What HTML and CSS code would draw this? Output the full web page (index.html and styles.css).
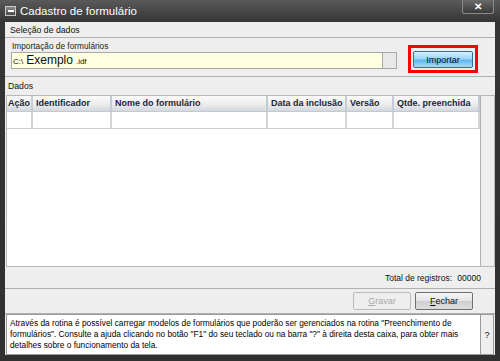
FILE: index.html
```html
<!DOCTYPE html>
<html lang="pt">
<head>
  <meta charset="UTF-8" />
  <title>Cadastro de formulário</title>
  <link rel="stylesheet" href="styles.css">
</head>
<body>
  <div class="window">
    <div class="titlebar">
      <span class="sysmenu"><span class="dash"></span></span>
      <span class="title">Cadastro de formulário</span>
      <span class="close">&#x2715;</span>
    </div>

    <div class="content">
      <div class="section-head">Seleção de dados</div>

      <div class="import">
        <div class="import-left">
          <div class="label">Importação de formulários</div>
          <div class="file-row">
            <div class="file-input"><span class="small">C:\</span><span class="big">Exemplo</span><span class="small">.idf</span></div>
            <div class="file-btn"></div>
          </div>
        </div>
        <div class="highlight">
          <button class="btn-blue">Importar</button>
        </div>
      </div>

      <div class="group-label">Dados</div>

      <div class="table-box">
        <div class="table-main">
          <div class="row head">
            <div class="c c1">Ação</div>
            <div class="c c2">Identificador</div>
            <div class="c c3">Nome do formulário</div>
            <div class="c c4">Data da inclusão</div>
            <div class="c c5">Versão</div>
            <div class="c c6">Qtde. preenchida</div>
          </div>
          <div class="row">
            <div class="c c1"></div>
            <div class="c c2"></div>
            <div class="c c3"></div>
            <div class="c c4"></div>
            <div class="c c5"></div>
            <div class="c c6"></div>
          </div>
        </div>
        <div class="scroll"></div>
      </div>

      <div class="total">Total de registros: <span class="num">00000</span></div>

      <div class="buttons">
        <button class="btn disabled"><u>G</u>ravar</button>
        <button class="btn"><u>F</u>echar</button>
      </div>

      <div class="help">
        <div class="help-text">Através da rotina é possível carregar modelos de formulários que poderão ser gerenciados na rotina "Preenchimento de formulários". Consulte a ajuda clicando no botão "F1" do seu teclado ou na barra "?" à direita desta caixa, para obter mais detalhes sobre o funcionamento da tela.</div>
        <div class="help-q">?</div>
      </div>
    </div>
  </div>
</body>
</html>
```

FILE: styles.css
```css
* {
  box-sizing: border-box;
  margin: 0;
  padding: 0;
}

body {
  background: #2e2e2e;
  font-family: 'Liberation Sans', Arial, sans-serif;
  font-size: 9px;
  color: #111;
}

.window {
  width: 500px;
  height: 361px;
  background: linear-gradient(#5a5a5a, #353535 22px, #303030);
  padding: 0 5px;
  display: flex;
  flex-direction: column;
}

.titlebar {
  height: 22px;
  flex-shrink: 0;
  display: flex;
  align-items: center;
  color: #fff;
}

.sysmenu {
  width: 11px;
  height: 10px;
  border: 1px solid #c8c8c8;
  background: linear-gradient(#8a8a8a, #4a4a4a);
  display: flex;
  align-items: center;
  justify-content: center;
  margin-right: 4px;
}

.dash {
  width: 6px;
  height: 2px;
  background: #fff;
}

.title {
  font-size: 11.5px;
  flex: 1;
}

.close {
  width: 32px;
  height: 14px;
  align-self: flex-start;
  margin-right: 1px;
  border: 1px solid #8a8a8a;
  border-top: none;
  border-radius: 0 0 3px 3px;
  background: linear-gradient(#6a6a6a, #3a3a3a);
  font-size: 10px;
  font-weight: bold;
  text-align: center;
  line-height: 13px;
}

.content {
  height: 333px;
  flex-shrink: 0;
  background: #eeeeee;
  display: flex;
  flex-direction: column;
}

.section-head {
  height: 16px;
  padding: 3px 5px 0;
  font-size: 8.7px;
  border-bottom: 1px solid #b0b0b0;
}

.import {
  height: 39px;
  display: flex;
  align-items: flex-start;
  padding: 3px 0 0 6px;
  border-bottom: 1px solid #b0b0b0;
}

.import-left {
  display: flex;
  flex-direction: column;
}

.label {
  height: 11px;
  line-height: 10px;
  font-size: 8.3px;
  color: #222;
  padding-left: 1px;
}

.file-row {
  display: flex;
}

.file-input {
  width: 372px;
  height: 17px;
  background: #ffffe1;
  border: 1px solid #a8a8a8;
  padding-left: 1px;
  display: flex;
  align-items: baseline;
  gap: 3px;
  line-height: 15px;
  white-space: nowrap;
}

.small {
  font-size: 8px;
}

.big {
  font-size: 12px;
}

.file-btn {
  width: 14px;
  height: 17px;
  background: #e8e8e8;
  border: 1px solid #a8a8a8;
  border-left: none;
}

.highlight {
  margin: 4px 0 0 11px;
  border: 3px solid #f00;
  background: #eeeeee;
  padding: 3px 2px 2px;
}

.btn-blue {
  display: block;
  width: 60px;
  height: 17px;
  font-family: 'Liberation Sans', Arial, sans-serif;
  font-size: 9px;
  color: #111;
  border: 1px solid #3d6b99;
  border-radius: 2px;
  background: linear-gradient(#d8f0ff, #9ad5fa 45%, #62b6ef 55%, #a4dbfb);
}

.group-label {
  height: 18px;
  padding: 4px 3px 0;
  font-size: 8.7px;
}

.table-box {
  height: 172px;
  margin-left: 1px;
  background: #fff;
  border: 1px solid #b8b8b8;
  display: flex;
}

.table-main {
  width: 473px;
}

.row {
  display: flex;
  height: 17px;
  border-bottom: 1px solid #cfcfcf;
}

.row.head {
  height: 16px;
  background: linear-gradient(#fbfbfb, #ececec 55%, #d2d8e0);
  font-weight: bold;
  color: #1c2636;
  border-bottom: 1px solid #c4c9d0;
}

.c {
  border-right: 2px solid #d4d4d4;
  padding: 2px 3px 0;
  white-space: nowrap;
  overflow: hidden;
}

.row.head .c {
  border-right: 2px solid #c4cbd4;
}

.c1 { width: 26px; padding-left: 1px; }
.c2 { width: 79px; }
.c3 { width: 156px; }
.c4 { width: 79px; }
.c5 { width: 47px; }
.c6 { width: 86px; }

.scroll {
  flex: 1;
  background: #eeeeee;
  border-left: 1px solid #b0b0b0;
}

.total {
  height: 22px;
  padding: 6px 14px 0 0;
  text-align: right;
  font-size: 8.5px;
  border-bottom: 1px solid #b0b0b0;
}

.num {
  margin-left: 3px;
}

.buttons {
  height: 25px;
  display: flex;
  justify-content: flex-end;
  align-items: center;
  gap: 4px;
  padding-right: 22px;
  border-bottom: 1px solid #b0b0b0;
}

.btn {
  width: 58px;
  height: 18px;
  font-family: 'Liberation Sans', Arial, sans-serif;
  font-size: 9px;
  color: #111;
  border: 1px solid #707070;
  border-radius: 2px;
  background: linear-gradient(#f6f6f6, #e4e4e4 50%, #d0d0d0 52%, #dedede);
}

.btn.disabled {
  color: #a8a8a8;
  border-color: #bcbcbc;
  background: #eeeeee;
}

.help {
  height: 41px;
  margin-left: 1px;
  display: flex;
}

.help-text {
  width: 475px;
  background: #fff;
  border: 1px solid #9a9a9a;
  padding: 3px 3px;
  line-height: 11px;
  font-size: 8.3px;
  color: #000;
}

.help-q {
  width: 13px;
  display: flex;
  align-items: center;
  justify-content: center;
  border: 1px solid #9a9a9a;
  border-left: none;
  background: #eeeeee;
}
```
